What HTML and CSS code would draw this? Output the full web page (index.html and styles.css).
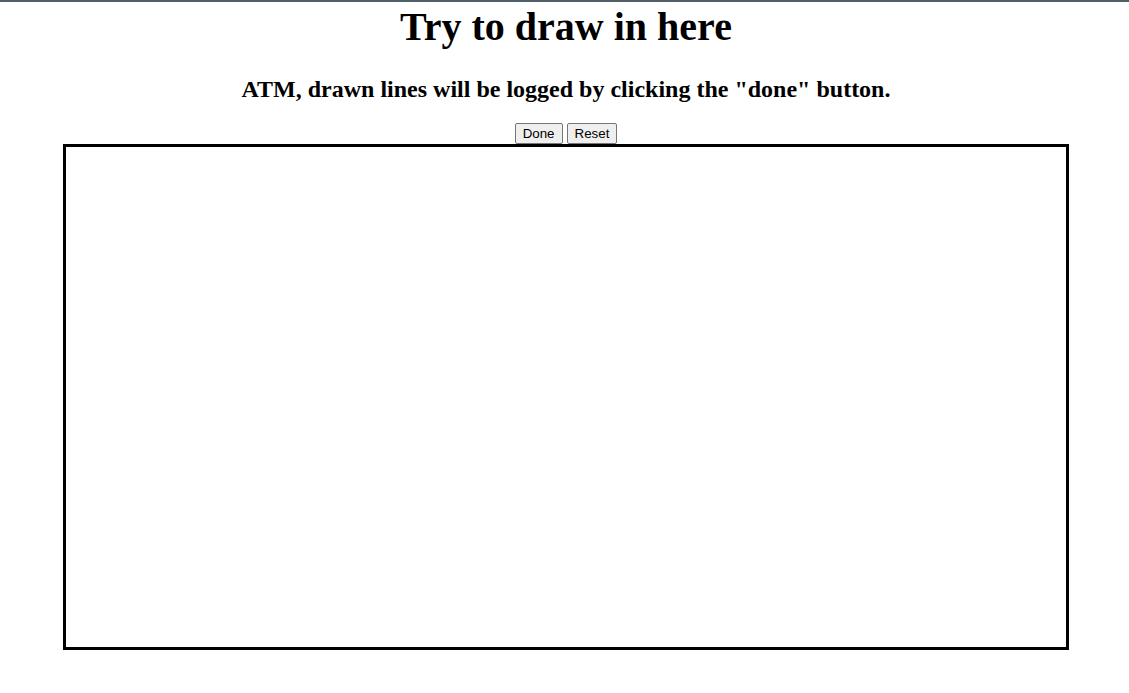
FILE: index.html
```html
<!DOCTYPE html>
<html lang="en">
<head>
<meta charset="utf-8">
<title>Try to draw in here</title>
<link rel="stylesheet" href="styles.css">
</head>
<body>
<div class="topbar"></div>
<main class="page">
  <h1 class="title">Try to draw in here</h1>
  <h2 class="subtitle">ATM, drawn lines will be logged by clicking the "done" button.</h2>
  <div class="controls">
    <button class="btn" type="button">Done</button>
    <button class="btn" type="button">Reset</button>
  </div>
  <div class="canvas"></div>
</main>
</body>
</html>
```
FILE: styles.css
```css
html, body {
  margin: 0;
  padding: 0;
  background: #ffffff;
}
body {
  font-family: "Liberation Serif", "Times New Roman", serif;
  color: #000;
}
.topbar {
  height: 2px;
  background: #4f5f6a;
}
.page {
  padding: 0 8px 0 11px;
  text-align: center;
}
.title {
  font-size: 40px;
  font-weight: bold;
  line-height: normal;
  margin: 1px 0 26px;
}
.subtitle {
  font-size: 24px;
  font-weight: bold;
  line-height: normal;
  margin: 0 0 20px;
}
.controls {
  display: flex;
  justify-content: center;
  gap: 4px;
}
.btn {
  font: 13.33px "Liberation Sans", Arial, sans-serif;
  color: #000;
  background: #efefef;
  border: 1px solid #767676;
  border-radius: 2px;
  padding: 2px 7px;
  line-height: 15px;
  margin: 0;
}
.canvas {
  width: 1000px;
  height: 500px;
  border: 3px solid #000;
  margin: 0 auto;
  background: #fff;
}
```
